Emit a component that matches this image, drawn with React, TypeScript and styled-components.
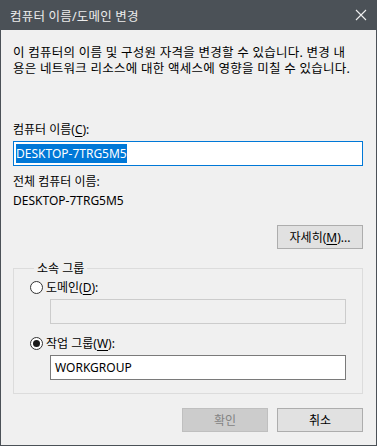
import styled, { createGlobalStyle } from "styled-components";

const GlobalStyle = createGlobalStyle`
  html, body {
    margin: 0;
    padding: 0;
    background: #f0f0f0;
  }
  body {
    font-family: "Noto Sans", "Noto Sans CJK KR", sans-serif;
    font-size: 12px;
    color: #000;
  }
`

const Window = styled.div`
  width: 377px;
  height: 446px;
  box-sizing: border-box;
  display: flex;
  flex-direction: column;
  background: #f0f0f0;
  border: 1px solid #4b5157;
  border-top: none;
`

const TitleBar = styled.div`
  height: 30px;
  flex-shrink: 0;
  margin: 0 -1px;
  padding: 0 10px;
  display: flex;
  align-items: center;
  justify-content: space-between;
  background: #4b5157;
  color: #ececec;
  font-size: 12.5px;
  letter-spacing: 0.2px;
`

const Body = styled.div`
  flex: 1;
  padding: 15px 13px 0 12px;
  display: flex;
  flex-direction: column;
`

const Description = styled.p`
  margin: 0;
  font-size: 12.5px;
  letter-spacing: 0.25px;
  line-height: 16px;
  white-space: nowrap;
`

const Text = styled.div<{ $gap?: number }>`
  line-height: 15px;
  margin-top: ${p => p.$gap ?? 0}px;
  white-space: nowrap;
`

const U = styled.span`
  text-decoration: underline;
  text-underline-offset: 2px;
`

const TextBox = styled.div<{ $focused?: boolean; $disabled?: boolean; $indent?: number }>`
  box-sizing: border-box;
  height: 25px;
  margin-top: 4px;
  margin-left: ${p => p.$indent ?? 0}px;
  padding: 0 4px;
  display: flex;
  align-items: center;
  background: ${p => (p.$disabled ? "#f0f0f0" : "#fff")};
  border: 1px solid ${p => (p.$focused ? "#0078d7" : p.$disabled ? "#cccccc" : "#7a7a7a")};
  line-height: 15px;
`

const Selected = styled.span`
  background: #0078d7;
  color: #fff;
  padding: 2px 0;
  margin-left: -2px;
`

const ButtonRow = styled.div<{ $gap?: number }>`
  display: flex;
  justify-content: flex-end;
  gap: 9px;
  margin-top: ${p => p.$gap ?? 0}px;
`

const Button = styled.button<{ $disabled?: boolean }>`
  box-sizing: border-box;
  width: 86px;
  height: 24px;
  padding: 0;
  font: inherit;
  font-size: 12px;
  background: ${p => (p.$disabled ? "#cccccc" : "#e1e1e1")};
  border: 1px solid ${p => (p.$disabled ? "#bfbfbf" : "#adadad")};
  color: ${p => (p.$disabled ? "#838383" : "#000")};
`

const Group = styled.fieldset`
  margin: 12px 0 0;
  padding: 4px 16px 13px 16px;
  border: 1px solid #dcdcdc;
  min-width: 0;
`

const Legend = styled.legend`
  padding: 0 3px;
  margin-left: 4px;
  line-height: 15px;
`

const RadioRow = styled.label<{ $gap?: number }>`
  display: flex;
  align-items: center;
  gap: 3px;
  line-height: 15px;
  margin-top: ${p => p.$gap ?? 0}px;
`

const RadioDot = styled.span<{ $checked?: boolean }>`
  box-sizing: border-box;
  width: 13px;
  height: 13px;
  border-radius: 50%;
  border: 1px solid #333;
  background: #fff;
  display: flex;
  align-items: center;
  justify-content: center;

  &::after {
    content: "";
    width: 7px;
    height: 7px;
    border-radius: 50%;
    background: #1a1a1a;
    display: ${p => (p.$checked ? "block" : "none")};
  }
`

function CloseIcon() {
  return (
    <svg width="12" height="12" viewBox="0 0 12 12">
      <path d="M1 1 L11 11 M11 1 L1 11" stroke="#f0f0f0" strokeWidth="1.1" fill="none" />
    </svg>
  )
}

export default function App() {
  return (
    <>
      <GlobalStyle />
      <Window>
        <TitleBar>
          <span>컴퓨터 이름/도메인 변경</span>
          <CloseIcon />
        </TitleBar>

        <Body>
          <Description>
            이 컴퓨터의 이름 및 구성원 자격을 변경할 수 있습니다. 변경 내
            <br />
            용은 네트워크 리소스에 대한 액세스에 영향을 미칠 수 있습니다.
          </Description>

          <Text $gap={45}>컴퓨터 이름(<U>C</U>):</Text>
          <TextBox $focused>
            <Selected>DESKTOP-7TRG5M5</Selected>
          </TextBox>

          <Text $gap={8}>전체 컴퓨터 이름:</Text>
          <Text $gap={4}>DESKTOP-7TRG5M5</Text>

          <ButtonRow $gap={17}>
            <Button>자세히(<U>M</U>)...</Button>
          </ButtonRow>

          <Group>
            <Legend>소속 그룹</Legend>
            <RadioRow>
              <RadioDot />
              <span>도메인(<U>D</U>):</span>
            </RadioRow>
            <TextBox $disabled $indent={20} />

            <RadioRow $gap={12}>
              <RadioDot $checked />
              <span>작업 그룹(<U>W</U>):</span>
            </RadioRow>
            <TextBox $indent={20}>WORKGROUP</TextBox>
          </Group>

          <ButtonRow $gap={14}>
            <Button $disabled>확인</Button>
            <Button>취소</Button>
          </ButtonRow>
        </Body>
      </Window>
    </>
  )
}
